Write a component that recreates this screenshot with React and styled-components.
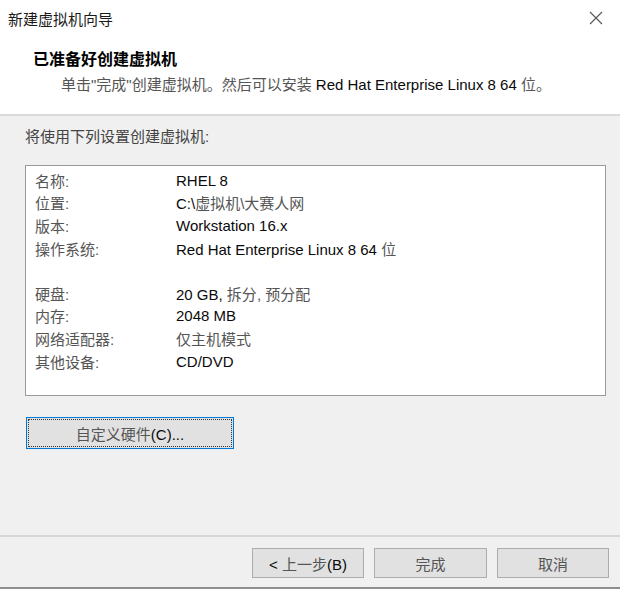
import React from 'react'
import styled, { createGlobalStyle } from 'styled-components'

const GlobalStyle = createGlobalStyle`
  html, body {
    margin: 0;
    padding: 0;
    background: #f0f0f0;
  }
  body {
    font-family: "Liberation Sans", "Noto Sans CJK SC", sans-serif;
  }
`

const Window = styled.div`
  width: 620px;
  height: 589px;
  display: flex;
  flex-direction: column;
  background: #f0f0f0;
  box-sizing: border-box;
  border-bottom: 2px solid #8e8e8e;
`

const Header = styled.div`
  height: 116px;
  background: #ffffff;
  border-bottom: 2px solid #dadada;
  box-sizing: border-box;
  display: flex;
  flex-direction: column;
`

const TitleBar = styled.div`
  height: 36px;
  display: flex;
  align-items: center;
  justify-content: space-between;
  padding: 0 12px 0 8px;
`

const Title = styled.div`
  font-size: 15px;
  color: #1a1a1a;
`

const CloseButton = styled.button`
  width: 24px;
  height: 24px;
  border: none;
  background: transparent;
  padding: 0;
  display: flex;
  align-items: center;
  justify-content: center;
`

const Intro = styled.div`
  padding: 10px 0 0 33px;
  display: flex;
  flex-direction: column;
  gap: 3px;
`

const Heading = styled.div`
  font-size: 16px;
  font-weight: 700;
  color: #000;
`

const Subtitle = styled.div`
  font-size: 15px;
  padding-left: 28px;
  color: #555;
`

const Body = styled.div`
  flex: 1;
  display: flex;
  flex-direction: column;
  padding: 0 14px 0 25px;
`

const Lead = styled.div`
  font-size: 15px;
  color: #444;
  margin-top: 10px;
  line-height: 22px;
`

const SummaryBox = styled.div`
  margin-top: 17px;
  height: 231px;
  box-sizing: border-box;
  background: #fff;
  border: 1px solid #9a9a9a;
  padding: 3px 10px 0 9px;
`

const Row = styled.div`
  display: grid;
  grid-template-columns: 141px 1fr;
  height: 22.6px;
  align-items: center;
  font-size: 15px;
  color: #555;
`

const Gap = styled.div`
  height: 22.6px;
`

const Txt = styled.span`
  color: ${p => (p.$latin ? '#0a0a0a' : '#555')};
`

const CustomButton = styled.button`
  margin-top: 21px;
  margin-left: 1px;
  width: 208px;
  height: 32px;
  background: #e1e1e1;
  border: 1px solid #0078d7;
  outline: 1px dotted #333;
  outline-offset: -3px;
  font-family: inherit;
  font-size: 15px;
  color: #555;
  padding: 0;
`

const Footer = styled.div`
  height: 52px;
  border-top: 2px solid #d6d6d6;
  box-sizing: border-box;
  display: flex;
  justify-content: flex-end;
  align-items: flex-start;
  gap: 10px;
  padding: 11px 11px 0 0;
`

const DialogButton = styled.button`
  width: ${p => p.$w || 113}px;
  height: 30px;
  background: #e1e1e1;
  border: 1px solid #adadad;
  font-family: inherit;
  font-size: 15px;
  color: #555;
  padding: 0;
`

function Mixed ({ text }) {
  const parts = text.split(/([A-Za-z0-9 .,:/()<\\]+)/).filter(Boolean)
  return parts.map((part, i) => (
    <Txt key={i} $latin={/[A-Za-z0-9<]/.test(part)}>{part}</Txt>
  ))
}

const rows = [
  ['名称:', 'RHEL 8'],
  ['位置:', 'C:\\虚拟机\\大赛人网'],
  ['版本:', 'Workstation 16.x'],
  ['操作系统:', 'Red Hat Enterprise Linux 8 64 位'],
  null,
  ['硬盘:', '20 GB, 拆分, 预分配'],
  ['内存:', '2048 MB'],
  ['网络适配器:', '仅主机模式'],
  ['其他设备:', 'CD/DVD']
]

export default function App () {
  return (
    <>
      <GlobalStyle />
      <Window>
        <Header>
          <TitleBar>
            <Title>新建虚拟机向导</Title>
            <CloseButton aria-label='关闭'>
              <svg width='14' height='14' viewBox='0 0 14 14'>
                <path d='M1 1L13 13M13 1L1 13' stroke='#555' strokeWidth='1.1' fill='none' />
              </svg>
            </CloseButton>
          </TitleBar>
          <Intro>
            <Heading>已准备好创建虚拟机</Heading>
            <Subtitle>
              <Mixed text='单击"完成"创建虚拟机。然后可以安装 Red Hat Enterprise Linux 8 64 位。' />
            </Subtitle>
          </Intro>
        </Header>
        <Body>
          <Lead>将使用下列设置创建虚拟机:</Lead>
          <SummaryBox>
            {rows.map((row, i) =>
              row
                ? (
                  <Row key={i}>
                    <span>{row[0]}</span>
                    <span><Mixed text={row[1]} /></span>
                  </Row>
                  )
                : <Gap key={i} />
            )}
          </SummaryBox>
          <CustomButton>
            <Mixed text='自定义硬件(C)...' />
          </CustomButton>
        </Body>
        <Footer>
          <DialogButton $w={112}><Mixed text='< 上一步(B)' /></DialogButton>
          <DialogButton $w={113}>完成</DialogButton>
          <DialogButton $w={112}>取消</DialogButton>
        </Footer>
      </Window>
    </>
  )
}
